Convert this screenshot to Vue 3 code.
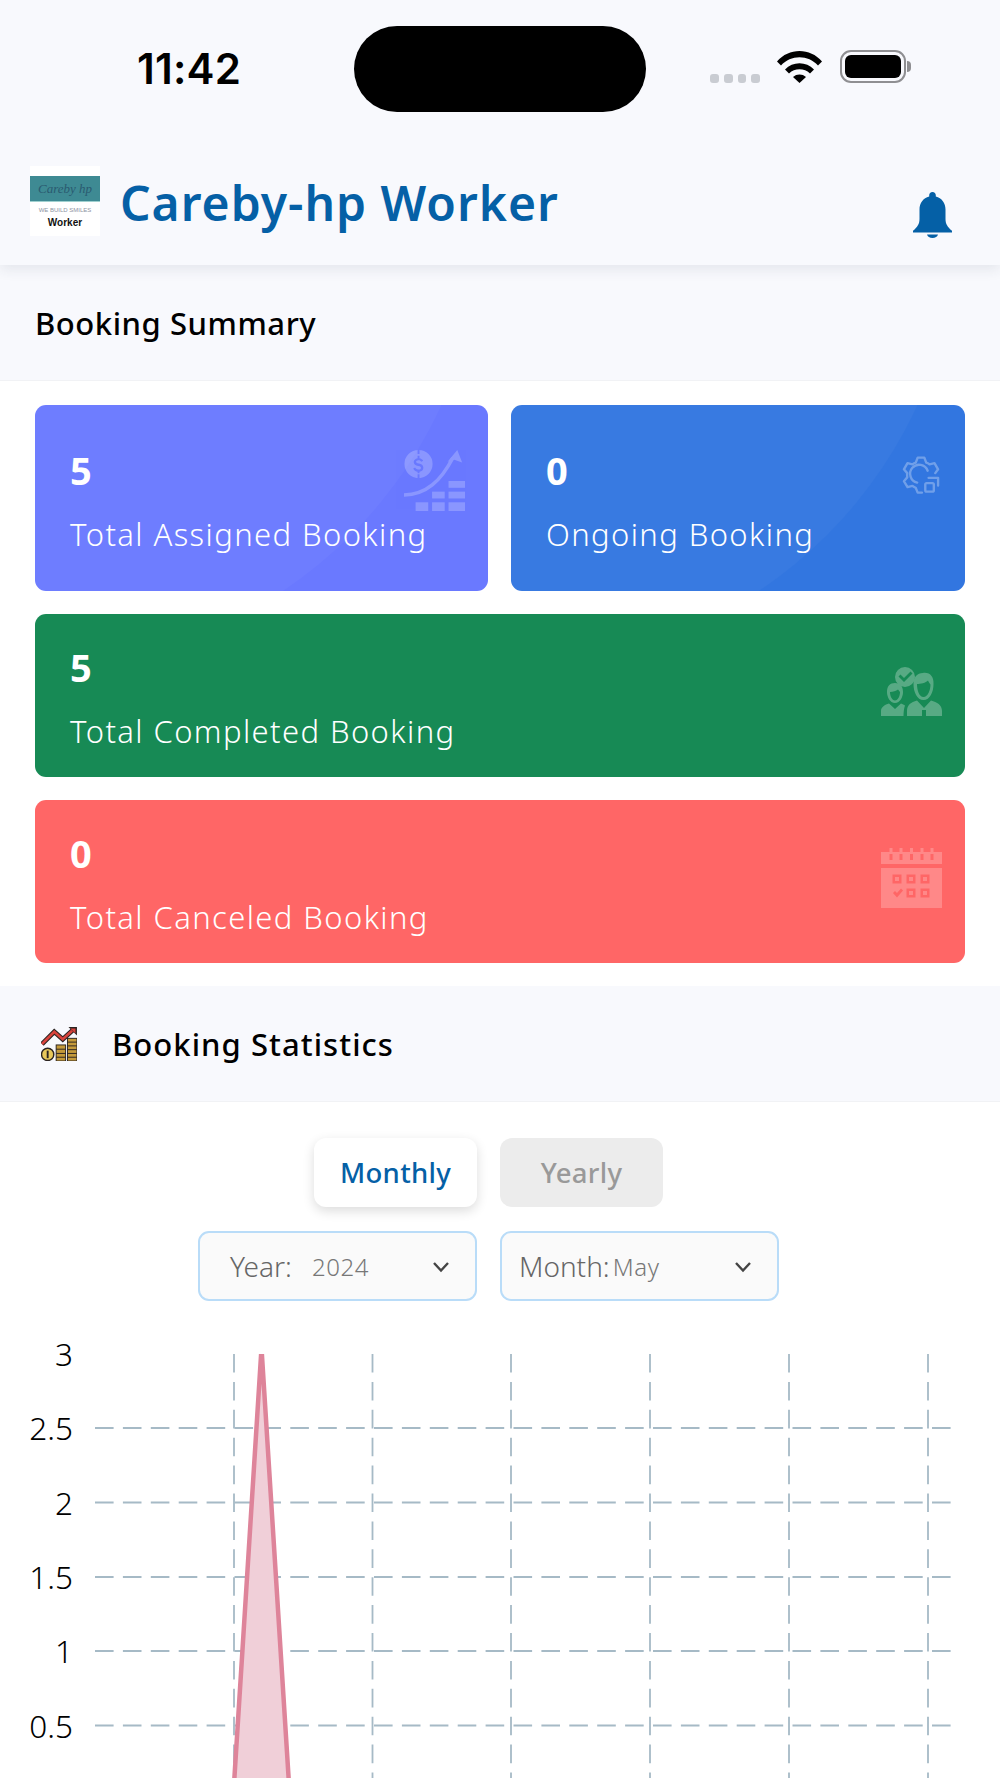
<script setup>
const summaryTop = [
  { value: 5, label: 'Total Assigned Booking', tone: 'violet', icon: 'growth' },
  { value: 0, label: 'Ongoing Booking', tone: 'blue', icon: 'gear' },
]
const summaryWide = [
  { value: 5, label: 'Total Completed Booking', tone: 'green', icon: 'team' },
  { value: 0, label: 'Total Canceled Booking', tone: 'red', icon: 'calendar' },
]
const yTicks = [
  { label: '3', y: 32 },
  { label: '2.5', y: 106 },
  { label: '2', y: 180.5 },
  { label: '1.5', y: 255 },
  { label: '1', y: 329 },
  { label: '0.5', y: 403.5 },
]
const xLines = [234, 372.5, 511, 650, 789, 928]
const pegs = [10, 20, 30.5, 41, 51]
</script>

<template>
  <div class="page">
    <div class="status">
      <div class="time">11:42</div>
      <div class="island"></div>
      <div class="status-icons">
        <div class="dots"><i></i><i></i><i></i><i></i></div>
        <svg class="wifi" viewBox="0 0 45 33"><path d="M0 11.500C6 4.500 14 1 22.500 1S39 4.500 45 11.500L41 15.500C36 10 29.500 7.200 22.500 7.200S9 10 4 15.500Z"/><path d="M8 19.500C12 15.500 17 13.300 22.500 13.300S33 15.500 37 19.500L33 23.500C30 20.700 26.500 19.300 22.500 19.300S15 20.700 12 23.500Z"/><path d="M16 27C18 25.300 20 24.500 22.500 24.500S27 25.300 29 27L22.500 33Z"/></svg>
        <div class="battery"><div class="cell"><b></b></div><span class="tip"></span></div>
      </div>
    </div>

    <header class="topbar">
      <div class="logo">
        <div class="logo-band">Careby hp</div>
        <div class="logo-tag">WE BUILD SMILES</div>
        <div class="logo-role">Worker</div>
      </div>
      <h1 class="brand">Careby-hp Worker</h1>
      <svg class="bell" viewBox="0 0 39 46"><path d="M19.500 0C21.500 0 22.800 1.300 22.800 3.300V4.500C28.800 6 32.500 11 32.500 17.500V27C32.500 32 34.500 35 39 38.800V40.500H0V38.800C4.500 35 6.500 32 6.500 27V17.500C6.500 11 10.200 6 16.200 4.500V3.300C16.200 1.300 17.500 0 19.500 0Z"/><path d="M14 42.500H25C24.500 44.800 22.300 46 19.500 46S14.500 44.800 14 42.500Z"/></svg>
    </header>

    <section class="bar summary"><h2>Booking Summary</h2></section>

    <section class="cards">
      <div class="row-two">
        <article v-for="c in summaryTop" :key="c.label" class="card tall" :class="c.tone">
          <div class="num">{{ c.value }}</div>
          <div class="lbl">{{ c.label }}</div>
          <svg v-if="c.icon === 'growth'" class="deco growth" viewBox="0 0 64 64"><path fill-rule="evenodd" d="M15 0A14.500 14.500 0 1 1 15 29A14.500 14.500 0 1 1 15 0ZM14 0H16V4H14ZM14 25H16V29H14ZM16 6H14V8.500C11.500 9 10 10.500 10 12.500C10 15 12 16 14.500 16.500C17 17 17.500 17.500 17.500 18.500C17.500 19.500 16.500 20.500 14.500 20C13 20 12 19 11.500 18L9.500 19C10.300 21 12 22 14 22.400V24H16V22.400C18.500 22 20 20.500 20 18.300C20 15.500 18 14.600 15.500 14C13 13.500 12.500 13 12.500 12.200C12.500 11.300 13.500 10.500 15 10.500C16.300 10.500 17.200 11.200 18 12.200L19.800 11C19 9.800 17.700 8.800 16 8.500Z"/><path d="M0 46.500C23 46 38 32 50.500 8" fill="none" stroke="#fff" stroke-width="3.600"/><path d="M55 0L60 13L52 10L45 12Z"/><rect x="12" y="54" width="13" height="9"/><rect x="29" y="54" width="13" height="9"/><rect x="46" y="54" width="17" height="9"/><rect x="29" y="43" width="13" height="7"/><rect x="46" y="43" width="17" height="7"/><rect x="46" y="32" width="17" height="7"/></svg>
          <svg v-else class="deco gear" viewBox="0 0 40 40"><path fill="none" stroke="#fff" stroke-width="2.500" stroke-linejoin="round" stroke-linecap="round" d="M21 38.500H16.500L14.500 33.500C13 33 12 32.300 11 31.500L5.800 32.800L2 26.500L5.500 22.500C5.300 21 5.300 19.500 5.500 18L2 14L5.800 7.500L11 8.800C12 8 13 7.400 14.500 7L16.500 1.700H23.500L25.500 7C27 7.400 28 8 29 8.800L34.200 7.500L38 14L35 18"/><path fill="none" stroke="#fff" stroke-width="2.500" stroke-linecap="round" d="M27 15.500A9.500 9.500 0 1 0 16 28"/><rect x="24.500" y="28.500" width="9" height="9" rx="1.500" fill="none" stroke="#fff" stroke-width="2.500"/><path fill="none" stroke="#fff" stroke-width="2.500" stroke-linecap="round" stroke-linejoin="round" d="M28 23H38V31"/></svg>
        </article>
      </div>
      <article v-for="c in summaryWide" :key="c.label" class="card wide" :class="c.tone">
        <div class="num">{{ c.value }}</div>
        <div class="lbl">{{ c.label }}</div>
        <svg v-if="c.icon === 'team'" class="deco team" viewBox="0 0 61 50"><path fill-rule="evenodd" d="M24 1A10 10 0 1 1 24 21A10 10 0 1 1 24 1ZM17.500 10.500L19.500 8.500L23 12L29.500 5.500L31.500 7.500L23 16Z"/><path fill-rule="evenodd" d="M42 7C49 6 53 11 52.500 18C52.500 26 49 34 42.500 34S32.500 26 32.500 18C32.500 11 36 7 42 7ZM36 18C39 18 45 17 47 14.500C48 16.500 49 18 49.500 18.500C49.500 24 47 31 42.500 31S36 24 36 18Z"/><path d="M36 34.500L43 42L50 34.500C56 36 61 39 61 45V50H45V44H41V50H26V45C26 39 30 36 36 34.500Z"/><path fill-rule="evenodd" d="M14 17C19 17 22 20 22 26C22 31 19 37 14 37S6 31 6 26C6 20 9 17 14 17ZM9 26C12 26 15 25 17 23.500C18 24.500 18.500 25.500 19 26C19 30 17 34.500 14 34.500S9 30 9 26Z"/><path d="M8 37.500L14 43L20 37.500C21.500 38 23 38.800 24 39.500C23 42 22.500 46 22.500 50H0V45C0 41 4 38.500 8 37.500Z"/></svg>
        <svg v-else class="deco cal" viewBox="0 0 61 60">
          <rect v-for="p in pegs" :key="p" :x="p - 1.5" y="0" width="3" height="4" />
          <path fill-rule="evenodd" d="M0 4H61V16H0ZM8.500 6V12H11.500V6ZM18.500 6V12H21.500V6ZM29 6V12H32V6ZM39.500 6V12H42.500V6ZM49.500 6V12H52.500V6Z"/>
          <path fill-rule="evenodd" d="M0 20H61V60H0ZM11.500 26.500V35.500H20.500V26.500ZM25.500 26.500V35.500H34.500V26.500ZM39.500 26.500V35.500H48.500V26.500ZM25.500 40.500V49.500H34.500V40.500ZM39.500 40.500V49.500H48.500V40.500ZM12 45L14 43L16 45L20 40.500L22 42.500L16 49.500Z"/>
          <rect x="14" y="29" width="4" height="4"/><rect x="28" y="29" width="4" height="4"/><rect x="42" y="29" width="4" height="4"/><rect x="28" y="43" width="4" height="4"/><rect x="42" y="43" width="4" height="4"/>
        </svg>
      </article>
    </section>

    <section class="bar stats-bar">
      <svg class="stat-icon" viewBox="0 0 38 36"><path d="M1 18L14 5L23 13L34 3" fill="none" stroke="#2a2320" stroke-width="5"/><path d="M1 18L14 5L23 13L34 3" fill="none" stroke="#d8433c" stroke-width="2.800"/><path d="M29 0H38V9Z" fill="#2a2320"/><path d="M31 1.500H36.500V7Z" fill="#d8433c"/><circle cx="7" cy="29" r="6.500" fill="#e8c85a" stroke="#2a2320" stroke-width="1.500"/><rect x="6" y="25" width="2" height="8" fill="#2a2320"/><rect x="16" y="19" width="10" height="17" fill="#c49a3a" stroke="#2a2320"/><path d="M16 23.500H26M16 28H26M16 32H26" stroke="#2a2320"/><rect x="28" y="12" width="10" height="24" fill="#c49a3a" stroke="#2a2320"/><path d="M28 16H38M28 20H38M28 24H38M28 28H38M28 32H38" stroke="#2a2320"/></svg>
      <h2>Booking Statistics</h2>
    </section>

    <section class="stats">
      <div class="tabs">
        <button class="tab on">Monthly</button>
        <button class="tab off">Yearly</button>
      </div>
      <div class="selects">
        <div class="select">
          <span class="sel-label year">Year:</span>
          <span class="sel-value">2024</span>
          <svg class="chev" viewBox="0 0 18 12"><path d="M2 2L9 9.500L16 2" fill="none" stroke="#444" stroke-width="2.400"/></svg>
        </div>
        <div class="select">
          <span class="sel-label">Month:</span>
          <span class="sel-value tight">May</span>
          <svg class="chev" viewBox="0 0 18 12"><path d="M2 2L9 9.500L16 2" fill="none" stroke="#444" stroke-width="2.400"/></svg>
        </div>
      </div>
      <svg class="chart" width="1000" height="456" viewBox="0 0 1000 456">
        <defs><clipPath id="plot"><rect x="90" y="32" width="870" height="424" /></clipPath></defs>
        <g class="grid">
          <line v-for="t in yTicks.slice(1)" :key="t.label" x1="95" x2="951" :y1="t.y" :y2="t.y" />
          <line v-for="x in xLines" :key="x" :x1="x" :x2="x" y1="32" y2="456" />
        </g>
        <g clip-path="url(#plot)">
          <path class="area" d="M233 478L261.500 32L290 478Z" />
          <path class="stroke" d="M233 478L261.500 26L290 478" />
        </g>
        <text v-for="t in yTicks" :key="t.label" class="tick" x="73" :y="t.y + 12" text-anchor="end">{{ t.label }}</text>
      </svg>
    </section>
  </div>
</template>

<style scoped>
.page {
  width: 1000px;
  height: 1778px;
  overflow: hidden;
  background: #fff;
  font-family: "Noto Sans", "Open Sans", sans-serif;
  color: #000;
}
h1, h2 { margin: 0; }

.status {
  height: 146px;
  background: #f8f9fd;
  display: flex;
  align-items: flex-start;
  padding-top: 26px;
  box-sizing: border-box;
  position: relative;
  z-index: 2;
}
.time {
  width: 354px;
  padding: 20px 0 0 137px;
  box-sizing: border-box;
  font: 600 42px/45px Inter, "Liberation Sans", sans-serif;
  letter-spacing: 0.2px;
}
.island {
  width: 292px;
  height: 86px;
  border-radius: 43px;
  background: #000;
}
.status-icons {
  display: flex;
  align-items: flex-start;
  padding: 24px 0 0 64px;
}
.dots { display: flex; gap: 5px; margin-top: 24px; }
.dots i { width: 8.800px; height: 9px; border-radius: 3px; background: #c9ccd2; }
.wifi { width: 45px; height: 33px; margin-left: 17px; fill: #000; }
.battery { display: flex; align-items: center; margin-left: 18px; height: 33px; }
.cell {
  width: 66px;
  height: 33px;
  box-sizing: border-box;
  border: 2px solid #8f8f92;
  border-radius: 11px;
  padding: 3px;
}
.cell b { display: block; height: 100%; background: #000; border-radius: 6px; }
.tip { width: 4px; height: 11px; background: #8f8f92; border-radius: 0 4px 4px 0; margin-left: 1px; }

.topbar {
  height: 119px;
  background: #f8f9fd;
  position: relative;
  z-index: 1;
  display: flex;
  align-items: flex-start;
  box-shadow: 0 5px 12px rgba(40, 60, 80, 0.09);
}
.logo {
  width: 70px;
  height: 70px;
  margin: 20px 0 0 30px;
  background: #fff;
  padding-top: 10px;
  box-sizing: border-box;
  text-align: center;
  flex: none;
}
.logo-band {
  height: 26px;
  background: #3e8a93;
  border-bottom: 1px solid #9fd0cf;
  box-sizing: border-box;
  color: #2a5a70;
  font: italic 13px/25px "Liberation Serif", serif;
}
.logo-tag {
  margin-top: 4px;
  font: 6px/9px "Liberation Sans", sans-serif;
  color: #8d93a3;
  white-space: nowrap;
}
.logo-role {
  margin-top: 1px;
  font: 700 10px/13px "Liberation Sans", sans-serif;
  color: #111;
}
.brand {
  margin: 27px 0 0 20px;
  font-size: 48px;
  line-height: 60px;
  font-weight: 600;
  letter-spacing: 1px;
  color: #0560a6;
  white-space: nowrap;
}
.bell { width: 39px; height: 46px; fill: #0560a6; margin: 46px 48px 0 auto; flex: none; }

.bar {
  height: 116px;
  background: #f8f9fd;
  display: flex;
  align-items: center;
  box-sizing: border-box;
  border-bottom: 1px solid #f1f2f5;
}
.bar h2 { font-size: 31px; font-weight: 500; }
.summary { padding-left: 35px; }
.summary h2 { letter-spacing: 0.55px; }
.stats-bar { padding-left: 41px; gap: 35px; }
.stats-bar h2 { letter-spacing: 1.05px; }
.stat-icon { width: 36px; height: 34px; flex: none; }

.cards {
  padding: 24px 35px 23px;
  display: flex;
  flex-direction: column;
  gap: 23px;
}
.row-two { display: grid; grid-template-columns: 453px 454px; gap: 23px; }
.card {
  position: relative;
  overflow: hidden;
  border-radius: 11px;
  color: #fff;
  padding: 0 0 0 35px;
  box-sizing: border-box;
}
.tall { height: 186px; padding-top: 41px; }
.wide { height: 163px; padding-top: 29px; }
.violet { background: #6a79ff; }
.blue { background: #3276e0; }
.green { background: #178a55; }
.red { background: #ff6666; }
.tall::before {
  content: "";
  position: absolute;
  left: -447px;
  top: -633px;
  width: 894px;
  height: 894px;
  border-radius: 50%;
  background: rgba(255, 255, 255, 0.03);
}
.num, .lbl { position: relative; }
.num { font-size: 38px; line-height: 48px; font-weight: 700; }
.lbl { margin-top: 20px; font-size: 31px; line-height: 40px; font-weight: 300; letter-spacing: 1.4px; white-space: nowrap; }
.deco { position: absolute; fill: #fff; opacity: 0.22; }
.growth { left: 369px; top: 45px; width: 62px; height: 62px; }
.gear { left: 391px; top: 50px; width: 38px; height: 40px; opacity: 0.3; }
.team { right: 23px; top: 52px; width: 61px; height: 50px; opacity: 0.28; }
.cal { right: 23px; top: 48px; width: 61px; height: 60px; }

.stats { padding-top: 36px; }
.tabs { display: flex; justify-content: center; gap: 23px; padding-right: 23px; }
.tab {
  width: 163px;
  height: 69px;
  border: 0;
  border-radius: 12px;
  font-family: inherit;
  font-size: 27.500px;
  font-weight: 500;
  letter-spacing: 0.3px;
  padding: 0;
}
.on { background: #fff; color: #0560a6; box-shadow: 0 4px 12px rgba(0, 0, 0, 0.14); }
.off { background: #ececec; color: #999; }
.selects { display: flex; justify-content: center; gap: 23px; margin-top: 24px; margin-left: -23px; }
.select {
  width: 279px;
  height: 70px;
  box-sizing: border-box;
  border: 2px solid #b9dcf8;
  border-radius: 11px;
  background: #fafafa;
  display: flex;
  align-items: center;
  padding-left: 17px;
  color: #666;
  position: relative;
}
.sel-label { font-size: 28px; font-weight: 300; }
.sel-label.year { margin-left: 13px; }
.sel-value { margin-left: 20px; font-size: 24px; font-weight: 300; letter-spacing: 0.6px; color: #777; }
.sel-value.tight { margin-left: 3px; }
.chev { position: absolute; right: 25px; top: 28px; width: 18px; height: 12px; }
.chart { display: block; margin-top: 21px; }
.grid line { stroke: #a6bac6; stroke-width: 1.800; stroke-dasharray: 18.600 9.300; }
.area { fill: #f0cfd8; }
.stroke { fill: none; stroke: #de849a; stroke-width: 4.500; stroke-linejoin: bevel; }
.tick { font-size: 31.500px; font-weight: 300; fill: #000; }
</style>
